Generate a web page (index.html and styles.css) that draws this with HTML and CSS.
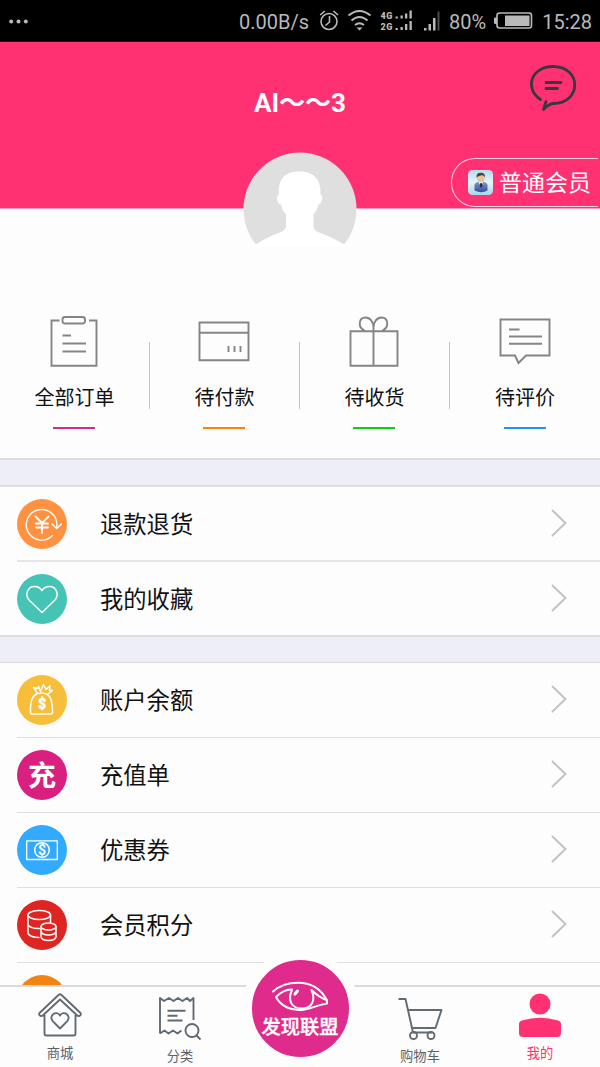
FILE: index.html
```html
<!DOCTYPE html>
<html lang="zh-CN">
<head>
<meta charset="utf-8">
<title>我的</title>
<link rel="stylesheet" href="styles.css">
</head>
<body>
<div class="app">
  <div class="status">
    <svg class="dots" width="20" height="6" viewBox="0 0 20 6"><circle cx="2.2" cy="2.500" r="2"/><circle cx="9.500" cy="2.500" r="2"/><circle cx="16.800" cy="2.500" r="2"/></svg>
    <span class="speed">0.00B/s</span>
    <svg class="sys" width="142" height="24" viewBox="0 0 142 24">
      <g fill="none" stroke="#b9b9b9" stroke-width="1.6">
        <circle cx="10" cy="12.500" r="8"/><path d="M10.500 7v6l-4 3.500M1.200 6l4.500-4M14.500 2l4.500 4"/>
        <path stroke-width="2" d="M29.500 6.500q11-9 22 0M32.500 11.500q8-7 16 0M36 16q4.500-3.500 9 0"/>
      </g>
      <path fill="#b9b9b9" d="M37.500 18.500h6l-3 3z"/>
      <g fill="#b9b9b9" font-family="Roboto, sans-serif" font-weight="900" font-size="9"><text x="61.500" y="9.500" textLength="12">4G</text><text x="61.500" y="21" textLength="12">2G</text></g>
      <path fill="#b9b9b9" d="M76.500 7.500h2.300v2h-2.300zM81.500 6.500h2.300v3h-2.300zM86 4.500h2.300v5H86zM90.500 1.500h2.300v8h-2.300zM76.500 19h2.300v2h-2.300zM81.500 18h2.300v3h-2.300zM86 15h2.300v6H86zM90.500 12h2.300v9h-2.300zM105 19h2.500v2.500H105zM109.500 15h2.500v6.500h-2.500zM114 9h2.500v12.500H114z"/>
      <path fill="#4b4b4b" d="M118.500 2.500h2v19h-2z"/>
    </svg>
    <span class="percent">80%</span>
    <svg class="battery" width="40" height="18" viewBox="0 0 40 18"><rect x="3" y="1" width="34.500" height="15" rx="2.500" fill="none" stroke="#b9b9b9" stroke-width="1.600"/><path fill="#b9b9b9" d="M11 3.500h24.500V14H11zM0 6l3-1v7.500L0 11.500z"/></svg>
    <span class="clock">15:28</span>
  </div>

  <header class="header">
    <h1 class="title">AI<span class="tilde">～～</span>3</h1>
    <svg class="chat" width="50" height="50" viewBox="0 0 50 50" fill="none" stroke="#38383f" stroke-width="2.800" stroke-linecap="round" stroke-linejoin="round"><path d="M12.500 36.500C-4 25.500 3 3.500 25 3.500c29 0 29 37 0 37-3 0-9 5-9.500 6l2.500-8"/><path d="M18 19.500h15M18 25.500h11.500"/></svg>
    <div class="member">
      <svg width="25" height="25" viewBox="0 0 25 25">
        <defs><linearGradient id="tile" x2="0" y2="1"><stop stop-color="#b3ddec"/><stop offset=".5" stop-color="#e4f5fb"/><stop offset="1" stop-color="#a7d5e8"/></linearGradient><linearGradient id="suit" x2="0" y2="1"><stop stop-color="#7e97d1"/><stop offset="1" stop-color="#374b92"/></linearGradient></defs>
        <rect width="25" height="25" rx="4.500" fill="url(#tile)"/>
        <path fill="url(#suit)" d="M6.500 20.500v-5q0-3 3.500-3.500h6q3.500.5 3.500 3.500v5q-6 3.500-13 0z"/><path fill="#fff" d="M10.500 11.500h4.500l-2 6z"/><path fill="#242b51" d="M12.300 13h1.400l.8 3-1.500 2-1.500-2z"/>
        <ellipse cx="12.800" cy="8" rx="3.900" ry="4.200" fill="#e6c398"/><path fill="#49453d" d="M8.500 7.500Q8 3 12.500 2.800q5-.2 4.500 4.700-1-2.500-3.500-2.200-3.500.7-5 2.200z"/>
      </svg>
      <span>普通会员</span>
    </div>
    <svg class="avatar" width="114" height="94" viewBox="0 0 114 94"><path fill="#dfdfdf" d="M13 92.500A56.500 56.500 0 1 1 101 92.500z"/><path fill="#fff" d="M12 93q14-9 25-12.500 6-2 6-6.500V62q-4-2.500-4.500-9-4-1-4.500-6 0-4 2-4.500C34.500 26 43 19.500 56.500 19.500S78.500 27 77.500 42.500q2.500.5 1.500 5-1 5-4 5.500-1 6.500-4.500 9V74q0 4.500 5.500 6.500 12 4 26 12.500v1H12z"/></svg>
  </header>

  <nav class="orders">
    <a class="order">
      <svg width="52" height="54" viewBox="0 0 52 54"><path d="M11.500 5.500H3.500v45.200h45V5.500H41"/><rect x="14.500" y="2" width="22.500" height="6.500" rx="2.500"/><path d="M14.500 20.500h8.500M14.500 28.500H38M14.500 36.500H38"/></svg>
      <span>全部订单</span><i class="mark pink"></i>
    </a>
    <a class="order">
      <svg width="52" height="54" viewBox="0 0 52 54"><path d="M1.500 7.500h49v37.700h-49zM1.500 17.800h49M30.500 31v6M36.500 31v6M42.500 31v6"/></svg>
      <span>待付款</span><i class="mark orange"></i>
    </a>
    <a class="order">
      <svg width="52" height="54" viewBox="0 0 52 54"><path d="M2.500 16.200h47v34.500h-47zM25.500 50V12.500M17 16c-8-4-6-13.500.5-13.500 4.500 0 8 4.500 8 10 0-5.500 3.500-10 8-10C40 2.500 42 12 34 16"/></svg>
      <span>待收货</span><i class="mark green"></i>
    </a>
    <a class="order">
      <svg width="52" height="54" viewBox="0 0 52 54"><path d="M1.500 4.500h49v36H27l-7.500 7.500-3.500-7.500H1.500zM10 14.500h10.500M10 21.500h33M10 28.700h33"/></svg>
      <span>待评价</span><i class="mark blue"></i>
    </a>
  </nav>

  <section class="group first">
    <a class="row">
      <svg class="badge" width="50" height="50" viewBox="0 0 50 50"><circle cx="25" cy="25" r="25" fill="#ff9141"/><path d="M35.500 36.500A15.300 15.300 0 1 1 39.700 28M35 25l4.700 4.500 4.700-4.500" stroke-width="1.400"/><path stroke-width="1.900" d="M18.500 17.500l6.500 6.500 6.500-6.500M25 24v10M19 24.500h12M19 28.500h12"/></svg>
      <span class="label">退款退货</span><svg class="arrow" width="18" height="30" viewBox="0 0 18 30"><path d="M2 2l13.500 13L2 28"/></svg>
    </a>
    <a class="row">
      <svg class="badge" width="50" height="50" viewBox="0 0 50 50"><circle cx="25" cy="25" r="25" fill="#45c3b5"/><path d="M25 38.500L12.500 26.500C7 20.500 11 12.500 17.500 12.500q5 0 7.500 4 2.500-4 7.500-4C39 12.500 43 20.500 37.500 26.500z"/></svg>
      <span class="label">我的收藏</span><svg class="arrow" width="18" height="30" viewBox="0 0 18 30"><path d="M2 2l13.500 13L2 28"/></svg>
    </a>
  </section>

  <section class="group second">
    <a class="row">
      <svg class="badge" width="50" height="50" viewBox="0 0 50 50"><circle cx="25" cy="25" r="25" fill="#f7be3a"/><path d="M20.500 18.500q8-2 12 3 3 4 3 16.500l-1 1h-20l-1-1q-.5-12 3-16.500 1.500-2 4-3l-4-6 4 1 1-2 2 5 3-7 2.500 5 4-3.500-.5 4.500h3l-5 4"/><text x="25" y="34" class="coin heavy">$</text></svg>
      <span class="label">账户余额</span><svg class="arrow" width="18" height="30" viewBox="0 0 18 30"><path d="M2 2l13.500 13L2 28"/></svg>
    </a>
    <a class="row">
      <span class="badge charge">充</span>
      <span class="label">充值单</span><svg class="arrow" width="18" height="30" viewBox="0 0 18 30"><path d="M2 2l13.500 13L2 28"/></svg>
    </a>
    <a class="row">
      <svg class="badge" width="50" height="50" viewBox="0 0 50 50"><circle cx="25" cy="25" r="25" fill="#31aaff"/><path stroke-width="1.300" d="M9.700 15.800h30.600v18.700H9.700z"/><circle cx="25" cy="25" r="7.300"/><text x="25" y="29.800" class="coin">$</text></svg>
      <span class="label">优惠券</span><svg class="arrow" width="18" height="30" viewBox="0 0 18 30"><path d="M2 2l13.500 13L2 28"/></svg>
    </a>
    <a class="row">
      <svg class="badge" width="50" height="50" viewBox="0 0 50 50"><circle cx="25" cy="25" r="25" fill="#df2522"/><ellipse cx="22.300" cy="15" rx="11.300" ry="4.500"/><path d="M11 15v18.500q2.500 4 11 4M11 25q3.500 4 11.500 3.500M33.500 15v7"/><ellipse cx="31.500" cy="26.500" rx="7.500" ry="3.500"/><path d="M24 26.500v10.500q1 3.500 7.500 3.500t7.500-3.500V26.500M24 31.500q1 3.500 7.500 3.500t7.500-3.500"/></svg>
      <span class="label">会员积分</span><svg class="arrow" width="18" height="30" viewBox="0 0 18 30"><path d="M2 2l13.500 13L2 28"/></svg>
    </a>
    <a class="row"><span class="badge amber"></span></a>
  </section>

  <nav class="tabs">
    <a class="tab home"><svg width="46" height="46" viewBox="0 0 46 46"><path d="M2.500 21L21.500 3Q23 1.500 24.500 3L43.500 21q1 2-1 3l-2-.3L23 7.500 5.500 23.700l-2 .3q-2-1-1-3zM7.500 23v18.500q0 2 2 2h27q2 0 2-2V23M23 36.500l-7.500-7.700c-4-5.500 4-11 7.500-5.300 3.500-5.700 11.500-.2 7.500 5.300z"/></svg><span>商城</span></a>
    <a class="tab kinds"><svg width="46" height="46" viewBox="0 0 46 46"><path d="M3 38.500V3l4 3 5-3 4.500 3 4.500-3 4.500 3L30 3l3 3 3.500-3v22M3 38.500l4.500-3 4 3 4.500-3 4.500 3 4-3M10.500 15.700h18M10.500 20.700h10M10.500 25.500h15"/><circle cx="35" cy="35.500" r="6.500"/><path d="M39.500 40.500l4 4"/></svg><span>分类</span></a>
    <a class="tab center"><span class="union"><svg width="58" height="33" viewBox="0 0 58 33"><path d="M2 11.500C14 1 41-3 54 17q2.500 3 2 6.500C44 25.500 39 29.500 30 30 20 30.500 10 26.500 5 17q8-8 16-7.500"/><path d="M21 10c-5 11 0 18.500 10 18.500S45 20 40.500 10q7 7 15 10"/><path stroke-width="3" d="M24 14l2.500-3"/></svg><b>发现联盟</b></span></a>
    <a class="tab cart"><svg width="46" height="46" viewBox="0 0 46 46"><path d="M1.500 4h7L16 37.500h19M11 15h33.500l-6 18H15"/><circle cx="16.500" cy="40.500" r="3.500"/><circle cx="34" cy="40.500" r="3.500"/></svg><span>购物车</span></a>
    <a class="tab mine"><svg width="46" height="46" viewBox="0 0 46 46"><circle cx="23" cy="12" r="10.500"/><path d="M2 32q0-2.500 3-3.500 18-5.500 36 0 3 1 3 3.500v9q0 4-4 4H6q-4 0-4-4z"/></svg><span>我的</span></a>
  </nav>
</div>
</body>
</html>
```
FILE: styles.css
```css
* { box-sizing: border-box; }
body {
  margin: 0;
  background: #fff;
  color: #111;
  font-family: Roboto, "Noto Sans CJK SC", sans-serif;
}
svg { display: block; flex: none; }
.app {
  position: relative;
  width: 600px;
  height: 1067px;
  overflow: hidden;
  background: #eeeef6;
}

.status {
  display: flex;
  align-items: center;
  height: 42px;
  padding: 2px 8px 0 9px;
  background: #000;
  border-bottom: 1px solid #3d0c1c;
  color: #b9b9b9;
  font-size: 20px;
  line-height: 40px;
  white-space: nowrap;
}
.dots { fill: #b9b9b9; }
.speed { width: 69px; margin-left: 210px; }
.sys { margin-left: 11px; margin-top: -1px; }
.percent { width: 37px; margin-left: -12px; }
.battery { margin-left: 8px; margin-top: -1px; }
.clock { margin-left: auto; }

.header {
  position: relative;
  height: 167px;
  background: #ff3173;
  border-bottom: 1px solid #ff9cbc;
}
.title {
  margin: 0;
  padding-top: 39px;
  color: #fff;
  font-size: 26px;
  font-weight: 700;
  line-height: 40px;
  text-align: center;
}
.tilde { font-family: "Noto Sans CJK SC", sans-serif; font-weight: 700; }
.chat { position: absolute; top: 21px; right: 22px; }
.avatar { position: absolute; top: 109.500px; left: 243px; }
.member {
  position: absolute;
  right: 2px;
  top: 116px;
  display: flex;
  align-items: center;
  gap: 6px;
  width: 147px;
  height: 49px;
  padding-left: 16px;
  border: 1.500px solid #ffd3e0;
  border-right: 0;
  border-radius: 24px 0 0 24px;
  color: #fff;
  font-size: 23px;
  line-height: 46px;
  white-space: nowrap;
}
.member span { padding-top: 3px; }

.orders {
  display: grid;
  grid-template-columns: repeat(4, 150px);
  height: 251px;
  margin-bottom: 25px;
  padding-top: 106px;
  border-bottom: 2px solid #dedee1;
  background: #fdfdfe;
}
.order {
  position: relative;
  display: flex;
  flex-direction: column;
  align-items: center;
  font-size: 20px;
  line-height: 30px;
}
.order svg { margin-left: -2px; fill: none; stroke: #858585; stroke-width: 1.900; }
.order span { margin-top: 14px; margin-left: -1px; }
.order + .order::before {
  content: "";
  position: absolute;
  left: -1px;
  top: 27px;
  width: 1px;
  height: 67px;
  background: #c4c4c4;
}
.order:last-child svg, .order:last-child span { margin-left: 0; }
.mark { width: 42px; height: 2px; margin-top: 14px; margin-left: -2px; }
.order:last-child .mark { margin-left: 0; }
.pink { background: #d82b89; }
.orange { background: #ff8010; }
.green { background: #12cd12; }
.blue { background: #2490fa; }

.group { background: #fdfdfe; }
.first {
  border-top: 2px solid #dedee1;
  border-bottom: 2px solid #dedee1;
}
.second { margin-top: 25px; border-top: 1px solid #dadadd; }
.row {
  display: flex;
  align-items: center;
  height: 75px;
  margin-left: 17px;
  border-bottom: 1px solid #dfdfdf;
}
.first .row { border-bottom: 2px solid #e6e6e7; }
.first .row:last-child { height: 73px; border-bottom: 0; }
.badge {
  width: 50px;
  height: 50px;
  fill: none;
  stroke: #fff;
  stroke-width: 1.500;
  stroke-linejoin: round;
  stroke-linecap: round;
}
.badge circle[fill] { stroke: none; }
.coin { fill: #fff; stroke: none; text-anchor: middle; font: 700 14px Roboto, sans-serif; }
.heavy { font-weight: 900; stroke: #fff; stroke-width: .500; }
.charge {
  border-radius: 50%;
  background: #d92080;
  color: #fff;
  font-size: 28px;
  font-weight: 700;
  line-height: 54px;
  text-align: center;
}
.amber { border-radius: 50%; background: #f08514; }
.label { margin-left: 33px; padding-top: 2px; font-size: 23.300px; line-height: 34px; }
.arrow {
  margin: -2px 32px 0 auto;
  fill: none;
  stroke: #c3c3c5;
  stroke-width: 2;
}

.tabs {
  position: absolute;
  left: 0;
  right: 0;
  bottom: 0;
  display: grid;
  grid-template-columns: repeat(5, 120px);
  height: 82px;
  border-top: 2px solid #dcd9d6;
  background: #fdfdfe;
}
.tab {
  display: flex;
  flex-direction: column;
  align-items: center;
  padding-top: 5px;
  color: #5b6267;
  font-size: 13.300px;
  line-height: 20px;
}
.tab > svg { fill: none; stroke: #616b72; stroke-width: 1.900; stroke-linejoin: round; }
.tab > span:not(.union) { margin-top: 6px; }
.kinds, .cart { padding-top: 8px; }
.mine { color: #ff3173; }
.mine > svg { fill: #ff3173; stroke: none; }
.center { padding: 0; }
.union {
  display: flex;
  flex-direction: column;
  align-items: center;
  flex: none;
  width: 117px;
  height: 117px;
  margin-top: -37px;
  padding-top: 20px;
  border: 10px solid #fdfdfe;
  border-radius: 50%;
  background: #df2b8c;
  color: #fff;
  font-size: 19.300px;
  line-height: 24px;
}
.union svg { fill: none; stroke: #fff; stroke-width: 2; stroke-linecap: round; stroke-linejoin: round; }
.union b { margin-top: 3px; font-weight: 500; white-space: nowrap; -webkit-text-stroke: .3px #fff; }
```
